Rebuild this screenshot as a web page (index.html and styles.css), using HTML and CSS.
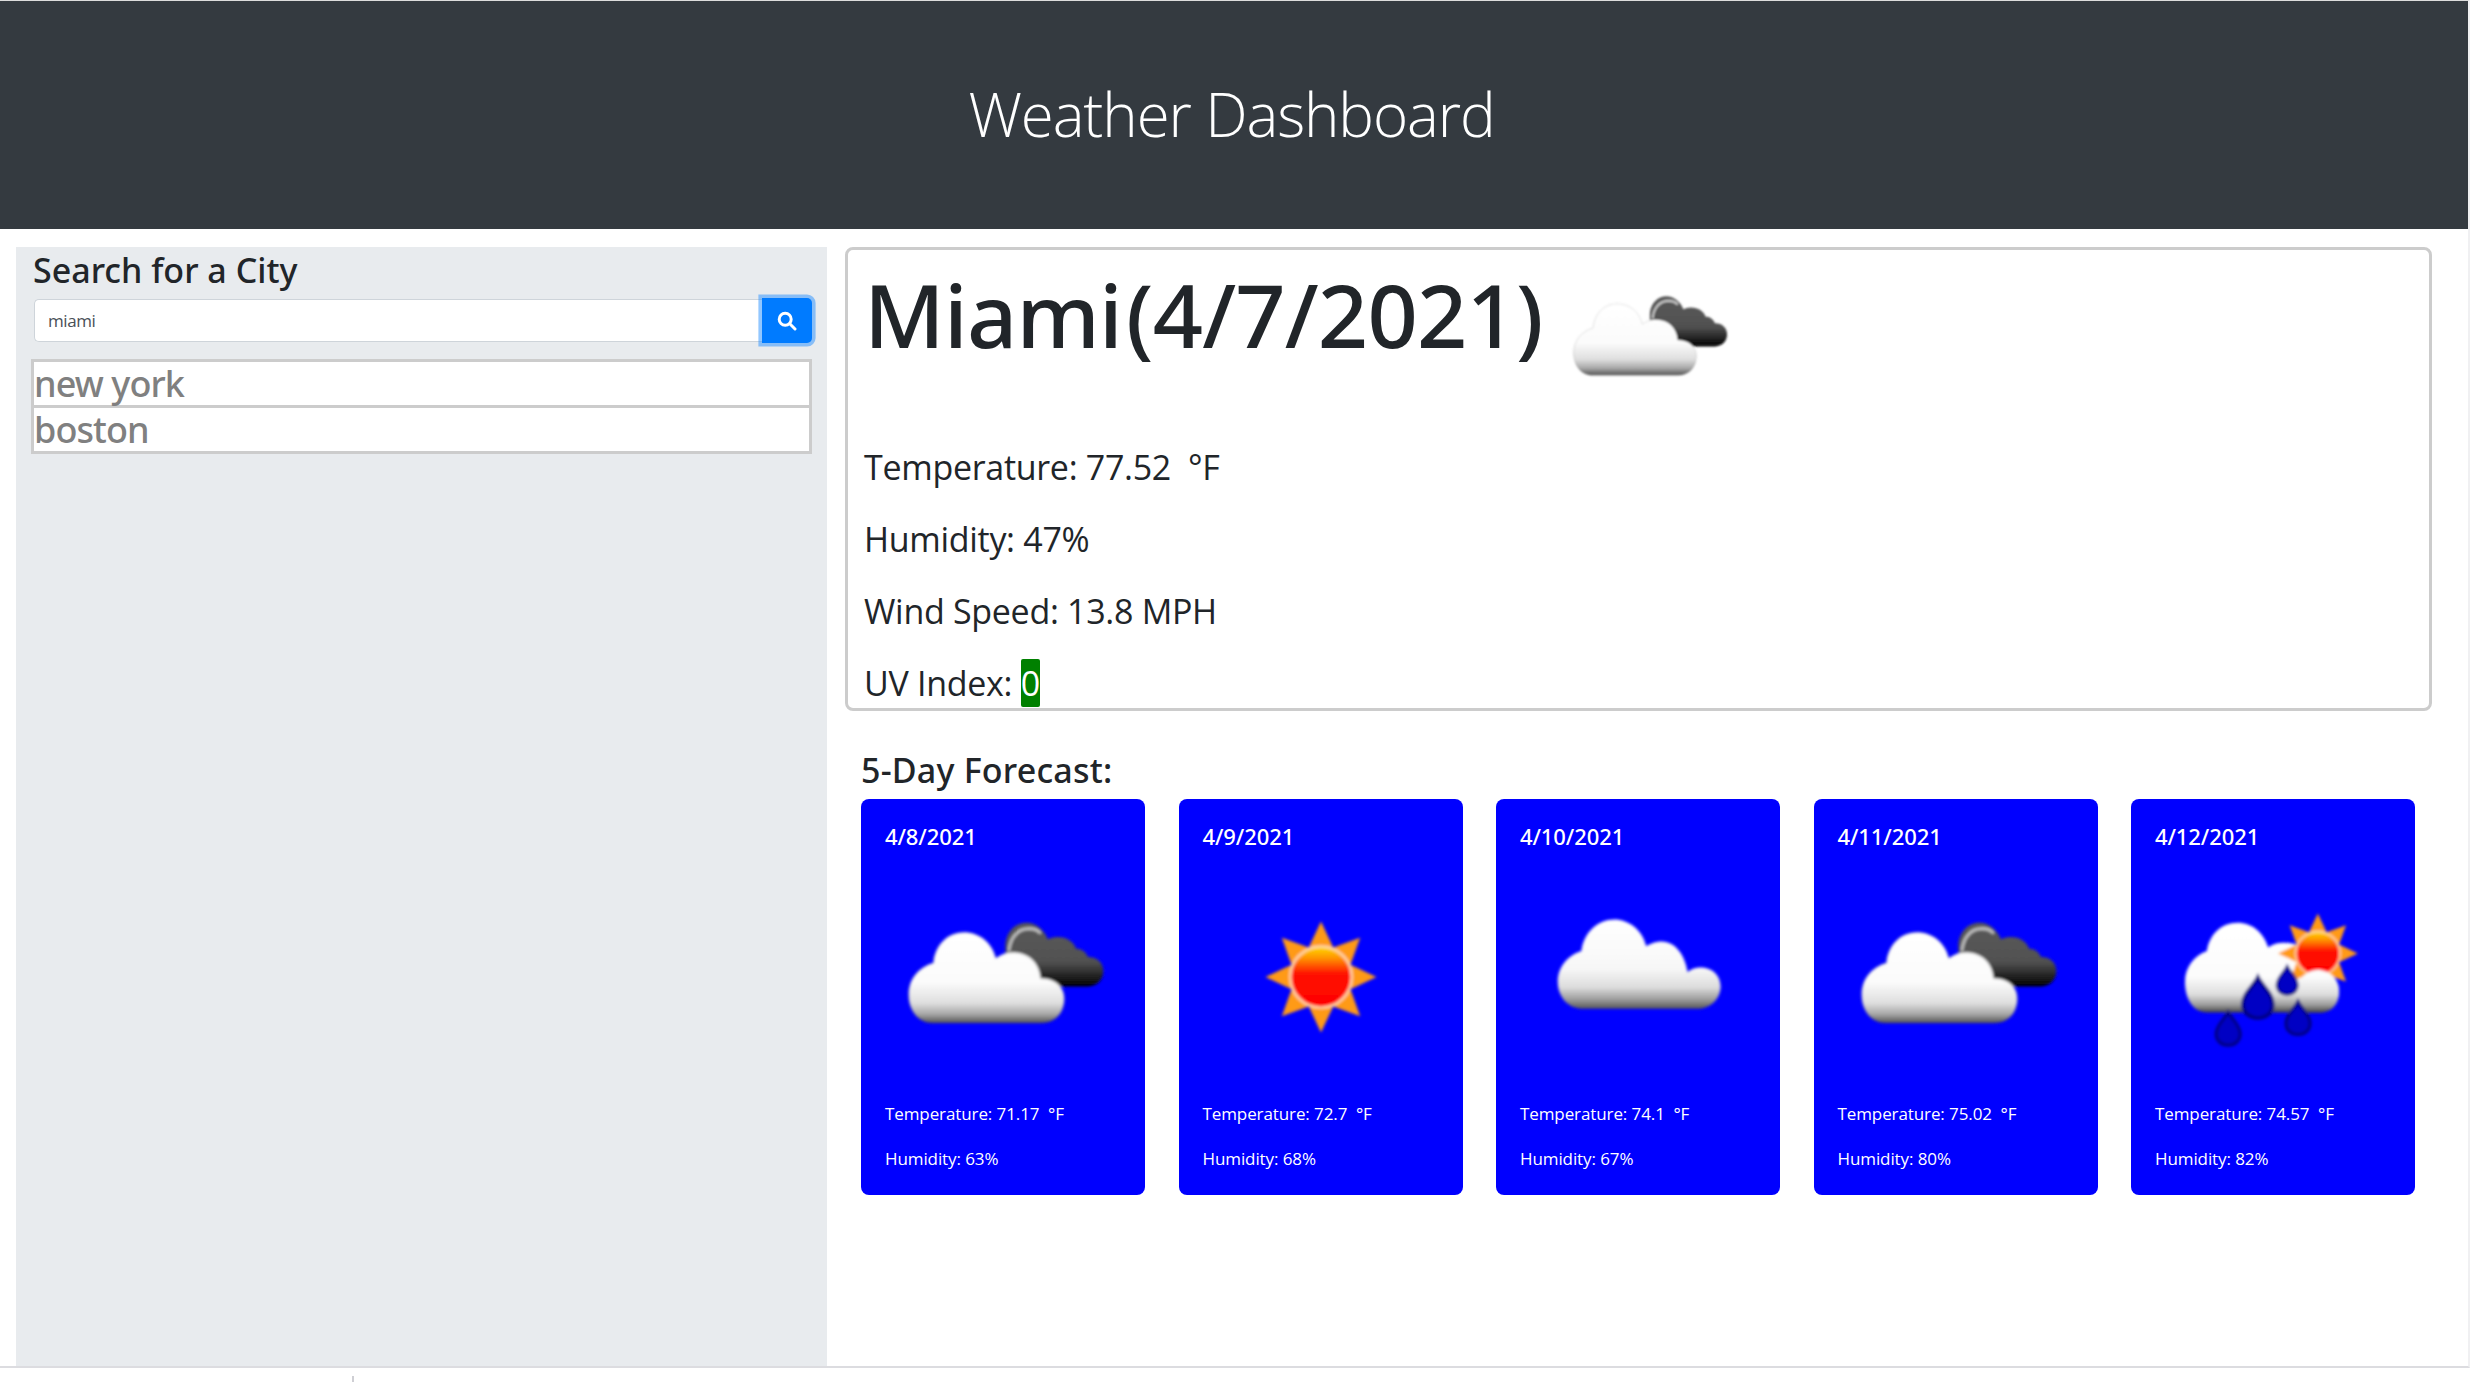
FILE: index.html
```html
<!DOCTYPE html>
<html lang="en">
<head>
<meta charset="utf-8">
<title>Weather Dashboard</title>
<link rel="stylesheet" href="styles.css">
</head>
<body>
<svg class="defs" width="0" height="0" aria-hidden="true">
  <defs>
    <filter id="soft" x="-10%" y="-10%" width="120%" height="120%"><feGaussianBlur stdDeviation="0.6"/></filter>
    <linearGradient id="gWhiteA" gradientUnits="userSpaceOnUse" x1="0" y1="31" x2="0" y2="69.5">
      <stop offset="0" stop-color="#fff"/><stop offset=".55" stop-color="#fbfbfb"/><stop offset=".78" stop-color="#dedede"/><stop offset=".9" stop-color="#a8a8a8"/><stop offset="1" stop-color="#555"/>
    </linearGradient>
    <linearGradient id="gWhiteB" gradientUnits="userSpaceOnUse" x1="0" y1="25.6" x2="0" y2="63.5">
      <stop offset="0" stop-color="#fff"/><stop offset=".55" stop-color="#f7f7f7"/><stop offset=".76" stop-color="#dcdcdc"/><stop offset=".9" stop-color="#999"/><stop offset="1" stop-color="#555"/>
    </linearGradient>
    <linearGradient id="gWhiteC" gradientUnits="userSpaceOnUse" x1="0" y1="27" x2="0" y2="65">
      <stop offset="0" stop-color="#fff"/><stop offset=".6" stop-color="#fcfcfc"/><stop offset=".8" stop-color="#ddd"/><stop offset=".92" stop-color="#999"/><stop offset="1" stop-color="#444"/>
    </linearGradient>
    <linearGradient id="gDark" gradientUnits="userSpaceOnUse" x1="0" y1="27" x2="0" y2="54">
      <stop offset="0" stop-color="#5a5a5a"/><stop offset=".62" stop-color="#505050"/><stop offset=".86" stop-color="#1c1c1c"/><stop offset="1" stop-color="#000"/>
    </linearGradient>
    <linearGradient id="gSun" gradientUnits="userSpaceOnUse" x1="0" y1="37" x2="0" y2="63">
      <stop offset="0" stop-color="#ffdc00"/><stop offset=".2" stop-color="#ff9000"/><stop offset=".45" stop-color="#ff1000"/><stop offset="1" stop-color="#f00"/>
    </linearGradient>
    <g id="cloudDark">
      <path d="M60 54H86C90 54 92.5 51 92.5 47.5C92.5 44 90 41.5 86 41.5C85 39 83 38 81 38C80 35 77 33 73 33C71.5 33 70 33.5 69 34C67.5 30 64 27 60 27C55 27 51.5 31 51 36L51 54Z" fill="url(#gDark)"/>
      <path d="M52.5 39C53 33 56.5 29.5 61 29.5C63 29.5 65 30.3 66 31.5" fill="none" stroke="#c8c8c8" stroke-width="1.1"/>
    </g>
    <path id="cloudA" d="M20 69.5H66C72.5 69.5 76 65 76 59C76 54 72 50.5 66 50.5C65.5 44 61 39.5 54 39.5C51.5 39.5 49 40.5 47 42C45.5 35.5 40 31 33.5 31C26 31 21 37 20.5 44C14 46 10 51 10 57.5C10 64 14 69.5 20 69.5Z" fill="url(#gWhiteA)" stroke="#000" stroke-opacity=".14" stroke-width=".5"/>
    <g id="sunShape">
      <polygon points="50,26.5 55.2,37.5 66.6,33.4 62.5,44.8 73.5,50 62.5,55.2 66.6,66.6 55.2,62.5 50,73.5 44.8,62.5 33.4,66.6 37.5,55.2 26.5,50 37.5,44.8 33.4,33.4 44.8,37.5" fill="#ff9a12"/>
      <circle cx="50" cy="50" r="13" fill="url(#gSun)" stroke="#ffd9b0" stroke-width="1"/>
    </g>
    <path id="drop" d="M0-9C2-5 6-2.5 6 2C6 5.5 3.3 7.5 0 7.5C-3.3 7.5-6 5.5-6 2C-6-2.5-2-5 0-9Z" fill="#0000c4" stroke="#000080" stroke-width="1.5"/>
    <g id="iconBroken"><g filter="url(#soft)"><use href="#cloudDark"/><use href="#cloudA"/></g></g>
    <g id="iconSun"><g filter="url(#soft)"><use href="#sunShape"/></g></g>
    <g id="iconCloud"><g filter="url(#soft)"><path d="M27 63.5H75C81 63.5 85 59 85 54C85 49 81 46 76.5 46C74 46 72 47 71 48C70 41 66 35 60 35C57.5 35 55 36 53.5 37C52 30 46 25.6 40 25.6C33 25.6 27 31 26 39C20 41 16 46 16 52C16 58 20 63.5 27 63.5Z" fill="url(#gWhiteB)"/></g></g>
    <g id="iconRain"><g filter="url(#soft)">
      <path d="M22 65H70C75 65 78 61 78 56C78 51 74 47 69 47C67 40 62 35.5 55 35.5C52 35.5 50 36 48 37.5C46 31 41 27 35 27C28 27 23 32 22 39C16.5 41 12.7 46 12.7 52C12.7 59 16 65 22 65Z" fill="url(#gWhiteC)"/>
      <use href="#sunShape" transform="translate(33 4) scale(.72)"/>
      <path d="M60 65H70C75 65 78 61 78 56C78 51 74 47 69 47C65 47 61 50 60 54Z" fill="url(#gWhiteC)"/>
      <use href="#drop" transform="translate(43.6 59.5) scale(1.05)"/>
      <use href="#drop" transform="translate(56 52) scale(.72)"/>
      <use href="#drop" transform="translate(60.6 68) scale(.85)"/>
      <use href="#drop" transform="translate(31 72.5) scale(.85)"/>
    </g></g>
  </defs>
</svg>

<div class="page">
  <header class="banner"><h1 class="banner-title">Weather Dashboard</h1></header>
  <div class="layout">
    <aside class="sidebar">
      <h2 class="side-title">Search for a City</h2>
      <form class="search">
        <input class="search-input" type="text" value="miami" aria-label="City">
        <button class="search-btn" type="button" aria-label="Search">
          <svg class="search-icon" viewBox="0 0 20 20"><circle cx="8.2" cy="8.2" r="6" fill="none" stroke="#fff" stroke-width="3"/><path d="M12.8 12.8L18 18" stroke="#fff" stroke-width="3" stroke-linecap="round"/></svg>
        </button>
      </form>
      <ul class="history">
        <li class="history-item">new york</li>
        <li class="history-item">boston</li>
      </ul>
    </aside>
    <main class="content">
      <section class="today">
        <div class="today-head">
          <h2 class="today-title">Miami<span class="today-date">(4/7/2021)</span></h2>
          <svg class="today-icon" viewBox="0 0 100 100"><use href="#iconBroken"/></svg>
        </div>
        <p class="today-line">Temperature: 77.52 &nbsp;°F</p>
        <p class="today-line">Humidity: 47%</p>
        <p class="today-line">Wind Speed: 13.8 MPH</p>
        <p class="today-line today-uv">UV Index: <span class="uv-badge">0</span></p>
      </section>
      <section class="forecast">
        <h3 class="forecast-title">5-Day Forecast:</h3>
        <div class="cards">
          <article class="card">
            <h4 class="card-date">4/8/2021</h4>
            <svg class="card-icon" viewBox="0 0 100 100"><use href="#iconBroken"/></svg>
            <p class="card-line">Temperature: 71.17 &nbsp;°F</p>
            <p class="card-line">Humidity: 63%</p>
          </article>
          <article class="card">
            <h4 class="card-date">4/9/2021</h4>
            <svg class="card-icon" viewBox="0 0 100 100"><use href="#iconSun"/></svg>
            <p class="card-line">Temperature: 72.7 &nbsp;°F</p>
            <p class="card-line">Humidity: 68%</p>
          </article>
          <article class="card">
            <h4 class="card-date">4/10/2021</h4>
            <svg class="card-icon" viewBox="0 0 100 100"><use href="#iconCloud"/></svg>
            <p class="card-line">Temperature: 74.1 &nbsp;°F</p>
            <p class="card-line">Humidity: 67%</p>
          </article>
          <article class="card">
            <h4 class="card-date">4/11/2021</h4>
            <svg class="card-icon" viewBox="0 0 100 100"><use href="#iconBroken"/></svg>
            <p class="card-line">Temperature: 75.02 &nbsp;°F</p>
            <p class="card-line">Humidity: 80%</p>
          </article>
          <article class="card">
            <h4 class="card-date">4/12/2021</h4>
            <svg class="card-icon" viewBox="0 0 100 100"><use href="#iconRain"/></svg>
            <p class="card-line">Temperature: 74.57 &nbsp;°F</p>
            <p class="card-line">Humidity: 82%</p>
          </article>
        </div>
      </section>
    </main>
  </div>
</div>
<div class="under"><span class="under-tick"></span></div>
</body>
</html>
```

FILE: styles.css
```css
* { box-sizing: border-box; }
html, body { margin: 0; padding: 0; background: #fff; }
body {
  width: 2484px;
  height: 1388px;
  overflow: hidden;
  font-family: "Open Sans", "Noto Sans", "Liberation Sans", sans-serif;
  color: #212529;
}
.defs { position: absolute; }
h1, h2, h3, h4, p, ul { margin: 0; padding: 0; }

.page {
  width: 2470px;
  height: 1368px;
  display: flex;
  flex-direction: column;
  border-top: 1px solid #dcdcdc;
  border-right: 2px solid #f0f0f2;
  border-bottom: 2px solid #dcdce0;
}

.banner {
  height: 228px;
  flex: none;
  background: #343a40;
  display: flex;
  align-items: center;
  justify-content: center;
  padding: 0 5px 3px 0;
}
.banner-title {
  font-size: 60px;
  font-weight: 300;
  line-height: 72px;
  color: #fff;
  letter-spacing: -1.1px;
}

.layout {
  flex: 1;
  display: flex;
  gap: 18px;
  padding: 18px 36px 0 16px;
  min-height: 0;
}

.sidebar {
  width: 811px;
  flex: none;
  background: #e8ebee;
  padding: 0 15px;
}
.side-title {
  font-family: "Noto Sans", "Open Sans", sans-serif;
  font-size: 34px;
  font-weight: 500;
  line-height: 46px;
  padding-left: 2px;
  letter-spacing: 0;
}
.search {
  display: flex;
  align-items: center;
  margin: 5px 0 0 3px;
  height: 45px;
}
.search-input {
  flex: 1;
  min-width: 0;
  height: 43px;
  border: 1px solid #ced4da;
  border-right: 0;
  border-radius: 5px 0 0 5px;
  background: #fff;
  padding: 0 13px;
  font: 400 17px "Open Sans", sans-serif;
  letter-spacing: -0.4px;
  color: #495057;
  outline: 0;
}
.search-btn {
  width: 50px;
  height: 45px;
  flex: none;
  border: 0;
  padding: 0;
  background: #007bff;
  border-radius: 0 5px 5px 0;
  box-shadow: 0 0 0 3.6px rgba(38, 143, 255, .5);
  display: flex;
  align-items: center;
  justify-content: center;
}
.search-icon { width: 20px; height: 20px; }

.history { list-style: none; margin-top: 16px; }
.history-item {
  height: 49px;
  border: 3px solid #cccccc;
  background: #fff;
  color: #808080;
  font-size: 36px;
  font-weight: 500;
  font-family: "Noto Sans", "Open Sans", sans-serif;
  line-height: 43px;
  letter-spacing: -0.9px;
}
.history-item + .history-item { margin-top: -3px; }

.content { flex: 1; min-width: 0; }

.today {
  height: 464px;
  border: 3px solid #cccccc;
  border-radius: 8px;
  padding: 0 16px;
  overflow: hidden;
}
.today-head {
  display: flex;
  align-items: flex-start;
  height: 190px;
}
.today-title {
  font-family: "Noto Sans", "Open Sans", sans-serif;
  font-size: 88px;
  font-weight: 500;
  line-height: 108px;
  margin-top: 10px;
  letter-spacing: -0.8px;
  padding-left: 0;
}
.today-date { margin-left: 4px; }
.today-icon { width: 186px; height: 186px; flex: none; margin-left: 12px; margin-top: -4px; }
.today-line {
  font-size: 34px;
  line-height: 54px;
  margin-bottom: 18px;
  letter-spacing: -0.3px;
}
.today-uv { margin-bottom: 0; }
.uv-badge {
  display: inline-block;
  background: #008000;
  color: #fff;
  border-radius: 2px;
  line-height: 48px;
  letter-spacing: 0;
  width: 19px;
  text-align: center;
}

.forecast { padding: 0 17px 0 16px; }
.forecast-title {
  font-family: "Noto Sans", "Open Sans", sans-serif;
  font-size: 34px;
  font-weight: 500;
  line-height: 44px;
  margin-top: 37px;
  letter-spacing: 0.2px;
}
.cards {
  display: grid;
  grid-template-columns: repeat(5, 284px);
  justify-content: space-between;
  margin-top: 7px;
}
.card {
  height: 396px;
  background: #0000ff;
  border-radius: 8px;
  color: #fff;
  padding: 24px 24px 0;
}
.card-date {
  font-family: "Noto Sans", "Open Sans", sans-serif;
  font-size: 22px;
  font-weight: 500;
  line-height: 27px;
  letter-spacing: -0.1px;
}
.card-icon {
  display: block;
  width: 236px;
  height: 236px;
  margin-top: 9px;
}
.card-line {
  font-size: 17px;
  line-height: 27px;
  margin-top: 5px;
  letter-spacing: -0.1px;
}
.card-line + .card-line { margin-top: 18px; }

.under { height: 20px; padding: 8px 0 0 352px; }
.under-tick { display: block; width: 2px; height: 6px; background: #cfcfd4; }
```
